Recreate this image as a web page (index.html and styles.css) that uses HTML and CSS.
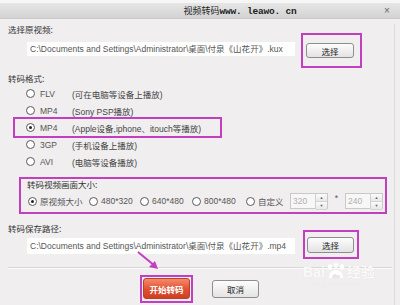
FILE: index.html
```html
<!DOCTYPE html>
<html>
  <head>
    <meta charset="UTF-8">
    <title>视频转码</title>
    <link rel="stylesheet" href="styles.css">
  </head>
  <body>
    <div class="window">
      <div class="topstrip"></div>
      <div class="titlebar">
        <span class="title">视频转码<b>www. leawo. cn</b></span>
        <span class="close">×</span>
      </div>
      <div class="body">
        <div class="label">选择原视频:</div>
        <div class="file-row">
          <div class="path">C:\Documents and Settings\Administrator\桌面\付泉《山花开》.kux</div>
          <div class="mark mark-pick"><span class="btn">选择</span></div>
        </div>

        <div class="label">转码格式:</div>
        <ul class="formats">
          <li><span class="radio"></span><span class="fmt">FLV</span><span class="desc">(可在电脑等设备上播放)</span></li>
          <li><span class="radio"></span><span class="fmt">MP4</span><span class="desc">(Sony PSP播放)</span></li>
          <li class="marked"><span class="radio on"></span><span class="fmt">MP4</span><span class="desc">(Apple设备,iphone、itouch等播放)</span></li>
          <li><span class="radio"></span><span class="fmt">3GP</span><span class="desc">(手机设备上播放)</span></li>
          <li><span class="radio"></span><span class="fmt">AVI</span><span class="desc">(电脑等设备播放)</span></li>
        </ul>

        <div class="size-group">
          <div class="legend">转码视频画面大小:</div>
          <div class="size-row">
            <span class="opt w61"><span class="radio on"></span>原视频大小</span>
            <span class="opt w51"><span class="radio"></span>480*320</span>
            <span class="opt w52"><span class="radio"></span>640*480</span>
            <span class="opt w54"><span class="radio"></span>800*480</span>
            <span class="opt w44"><span class="radio"></span>自定义</span>
            <span class="spin"><span class="spin-val">320</span><span class="spin-arrows"><i>▲</i><i>▼</i></span></span>
            <span class="star">*</span>
            <span class="spin"><span class="spin-val">240</span><span class="spin-arrows"><i>▲</i><i>▼</i></span></span>
          </div>
        </div>

        <div class="label label-save">转码保存路径:</div>
        <div class="file-row file-row-save">
          <div class="path">C:\Documents and Settings\Administrator\桌面\付泉《山花开》.mp4</div>
          <div class="mark mark-save"><span class="btn">选择</span></div>
        </div>

        <div class="sep"></div>

        <div class="footer">
          <div class="mark mark-start"><span class="btn btn-start">开始转码</span></div>
          <span class="btn btn-cancel">取消</span>
        </div>
      </div>

      <svg class="arrow" width="34" height="26" viewBox="0 0 34 26">
        <line x1="8" y1="4" x2="25" y2="18" stroke="#c23fc0" stroke-width="2"/>
        <polygon points="28,21 19,19 25,13" fill="#c23fc0"/>
      </svg>

      <div class="watermark">
        <div class="wm-main">Bai<svg width="22" height="18" viewBox="0 0 22 18"><ellipse cx="5" cy="4" rx="2.2" ry="2.8" fill="#fff"/><ellipse cx="11" cy="2.5" rx="2.2" ry="2.5" fill="#fff"/><ellipse cx="17" cy="4" rx="2.2" ry="2.8" fill="#fff"/><path d="M4 15 C4 9 8 7 11 7 C14 7 18 9 18 15 Z" fill="#fff"/><text x="11" y="14.5" font-size="6" text-anchor="middle" fill="#e4e2e3" font-family="Liberation Sans, sans-serif" font-weight="bold">du</text></svg>经验</div>
        <div class="wm-sub">jingyan.baidu.com</div>
      </div>
    </div>
  </body>
</html>
```

FILE: styles.css
```css
body {
  margin: 0;
  font-family: 'Noto Sans CJK SC', 'Liberation Sans', sans-serif;
  font-size: 9px;
  color: #333;
}

.window {
  position: relative;
  width: 400px;
  height: 305px;
  overflow: hidden;
  background-color: #f0eeef;
}

.topstrip {
  height: 3px;
  background-color: #f6f6f6;
}

.titlebar {
  display: flex;
  align-items: center;
  height: 15px;
  padding: 0 8px 0 96px;
  background: linear-gradient(#e6e6e6, #d3d3d3);
  border-bottom: 1px solid #c9c9c9;
}
.title {
  flex: 1;
  text-align: center;
  font-size: 9px;
  color: #222;
}
.title b {
  font-family: 'Liberation Mono', monospace;
  font-size: 9.5px;
  letter-spacing: -0.2px;
}
.close {
  width: 8px;
  font-family: 'Liberation Sans', sans-serif;
  font-size: 10px;
  color: #666;
}

.body {
  width: 378px;
  height: 286px;
  padding: 0 8px;
  border-right: 1px solid #dcdadb;
}

.label {
  margin-top: 5px;
  height: 10px;
  line-height: 10px;
  font-size: 8.5px;
}

/* file rows */
.file-row {
  display: flex;
  height: 35px;
  margin-top: -1px;
}
.path {
  margin: 9px 0 0 19px;
  width: 265px;
  height: 14px;
  padding-left: 3px;
  line-height: 14px;
  background-color: #fff;
  font-family: 'Liberation Sans', 'Noto Sans CJK SC', sans-serif;
  font-size: 8.5px;
  color: #555;
  white-space: nowrap;
  overflow: hidden;
}
.mark {
  box-sizing: border-box;
  border: 2px solid #c23fc0;
}
.mark-pick {
  width: 61px;
  height: 35px;
  margin-left: 6px;
  padding: 8px 0 0 3px;
}

.btn {
  display: flex;
  align-items: center;
  justify-content: center;
  box-sizing: border-box;
  width: 48px;
  height: 15px;
  border: 1px solid #8e8e8e;
  border-radius: 3px;
  background: linear-gradient(#fdfdfd, #e3e3e3);
  font-size: 8.5px;
  color: #222;
}

/* format list */
.formats {
  list-style: none;
  margin: 2px 0 0 18px;
  padding: 0;
}
.formats li {
  position: relative;
  display: flex;
  align-items: center;
  height: 17px;
  font-size: 8.5px;
  color: #444;
}
.formats li.marked::after {
  content: '';
  position: absolute;
  left: -13px;
  top: -2px;
  bottom: -2px;
  width: 209px;
  box-sizing: border-box;
  border: 2px solid #c23fc0;
}
.radio {
  position: relative;
  box-sizing: border-box;
  width: 9px;
  height: 9px;
  margin-right: 5px;
  border: 1px solid #5a5a5a;
  border-radius: 50%;
  background-color: #fff;
}
.radio.on::after {
  content: '';
  position: absolute;
  left: 2px;
  top: 2px;
  width: 3px;
  height: 3px;
  border-radius: 50%;
  background-color: #222;
}
.fmt {
  width: 32px;
  font-family: 'Liberation Sans', sans-serif;
  font-size: 8.5px;
  color: #555;
}
.desc {
  font-family: 'Liberation Sans', 'Noto Sans CJK SC', sans-serif;
}

/* size group */
.size-group {
  box-sizing: border-box;
  width: 368px;
  height: 37px;
  margin: 7px 0 0 11px;
  border: 2px solid #c23fc0;
}
.legend {
  height: 10px;
  line-height: 10px;
  margin-left: 6px;
  font-size: 8.5px;
}
.size-row {
  display: flex;
  align-items: center;
  height: 16px;
  margin-top: 4px;
  padding-left: 7px;
  font-family: 'Liberation Sans', 'Noto Sans CJK SC', sans-serif;
  font-size: 8.5px;
  color: #555;
}
.opt {
  display: flex;
  align-items: center;
  flex: none;
}
.opt .radio { margin-right: 3px; }
.w61 { width: 61px; }
.w51 { width: 51px; }
.w52 { width: 52px; }
.w54 { width: 54px; }
.w44 { width: 44px; }

.spin {
  display: flex;
  box-sizing: border-box;
  width: 38px;
  height: 16px;
  border: 1px solid #c9c9c9;
  background-color: #f7f7f7;
}
.spin-val {
  flex: 1;
  padding-left: 2px;
  line-height: 14px;
  color: #b0b0b0;
}
.spin-arrows {
  display: flex;
  flex-direction: column;
  width: 11px;
  border-left: 1px solid #cfcfcf;
}
.spin-arrows i {
  flex: 1;
  font-style: normal;
  font-size: 4px;
  line-height: 7px;
  text-align: center;
  color: #666;
  background: linear-gradient(#fbfbfb, #e8e8e8);
  border-bottom: 1px solid #d4d4d4;
}
.star {
  width: 17px;
  align-self: flex-start;
  text-align: center;
  color: #555;
}

.label-save {
  margin-top: 9px;
}
.file-row-save {
  height: 29px;
  margin-top: -3px;
}
.file-row-save .path {
  margin-top: 8px;
  height: 16px;
  line-height: 16px;
}
.mark-save {
  width: 56px;
  height: 29px;
  margin-left: 8px;
  padding: 5px 0 0 2px;
}
.mark-save .btn {
  width: 47px;
  height: 16px;
}

.sep {
  height: 1px;
  margin: 8px -6px 0 0;
  background-color: #d8d6d7;
  border-bottom: 1px solid #fbfbfb;
}

.footer {
  display: flex;
  align-items: center;
  padding-left: 132px;
  margin-top: 6px;
}
.mark-start {
  width: 53px;
  height: 28px;
  padding: 1px 0 0 1px;
}
.btn-start {
  width: 47px;
  height: 21px;
  border: 1px solid #b8412c;
  background: linear-gradient(#f58a6c, #e0502f 55%, #cf3f22);
  color: #fff;
  font-weight: bold;
}
.btn-cancel {
  width: 47px;
  height: 18px;
  margin-left: 19px;
}

.arrow {
  position: absolute;
  left: 130px;
  top: 248px;
}

.watermark {
  position: absolute;
  left: 303px;
  top: 263px;
  color: #fbfafa;
  text-shadow: 0 0 1px #dedcdd;
}
.wm-main {
  display: flex;
  align-items: flex-end;
  font-family: 'Liberation Sans', 'Noto Sans CJK SC', sans-serif;
  font-size: 14px;
  font-weight: bold;
  line-height: 18px;
}
.wm-sub {
  margin-left: 10px;
  font-family: 'Liberation Sans', sans-serif;
  font-size: 6px;
  color: #f7f6f6;
}
```
